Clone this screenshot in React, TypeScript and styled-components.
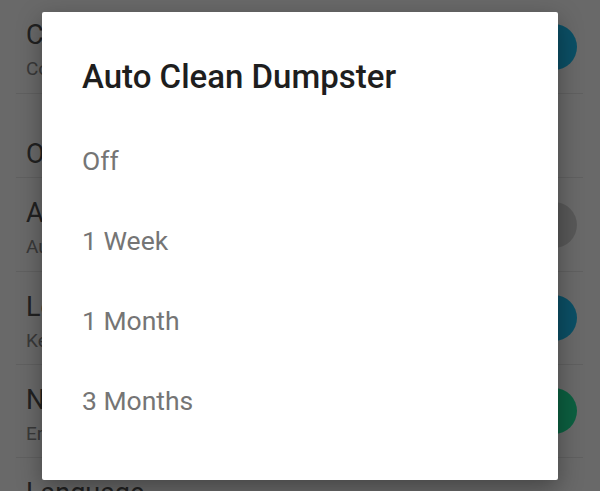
import * as React from 'react';
import styled, { createGlobalStyle } from 'styled-components';

const GlobalStyle = createGlobalStyle`
  html, body {
    margin: 0;
    padding: 0;
    background: #ffffff;
    overflow: hidden;
  }
  body {
    font-family: Roboto, "Noto Sans", sans-serif;
  }
`;

const Page = styled.div`
  position: relative;
  width: 600px;
  height: 491px;
  overflow: hidden;
  background: #ffffff;
`;

const List = styled.div`
  display: flex;
  flex-direction: column;
  margin: 0 17px 0 16px;
`;

const Row = styled.div<{ $height: number }>`
  display: flex;
  align-items: center;
  justify-content: space-between;
  height: ${({ $height }) => $height}px;
  padding: 0 6px 0 10px;
  border-bottom: 1px solid #e8e8e8;
  flex-shrink: 0;
`;

const TextBlock = styled.div<{ $top: number }>`
  align-self: flex-start;
  display: flex;
  flex-direction: column;
  padding-top: ${({ $top }) => $top}px;
`;

const RowTitle = styled.div`
  font-size: 27px;
  line-height: 32px;
  color: #505050;
  white-space: nowrap;
`;

const RowSubtitle = styled.div`
  margin-top: 2px;
  font-size: 19px;
  line-height: 32px;
  color: #8a8a8a;
  white-space: nowrap;
`;

const Badge = styled.div<{ $color: string }>`
  width: 46px;
  height: 46px;
  border-radius: 50%;
  background: ${({ $color }) => $color};
  flex-shrink: 0;
`;

const Scrim = styled.div`
  position: absolute;
  inset: 0;
  background: rgba(0, 0, 0, 0.59);
  display: flex;
  align-items: center;
  justify-content: center;
`;

const Dialog = styled.div`
  width: 516px;
  height: 468px;
  box-sizing: border-box;
  background: #ffffff;
  border-radius: 2px;
  box-shadow: 0 8px 24px rgba(0, 0, 0, 0.35);
  padding: 44px 40px 39px;
  display: flex;
  flex-direction: column;
`;

const DialogTitle = styled.h2`
  margin: 0 0 24px;
  font-size: 33px;
  line-height: 41px;
  font-weight: 500;
  color: #1e1e1e;
`;

const Option = styled.div`
  height: 80px;
  font-size: 26.5px;
  line-height: 80px;
  color: #757575;
`;

type Setting = {
  title: string;
  subtitle?: string;
  height: number;
  top: number;
  badge?: string;
};

const settings: Setting[] = [
  { title: 'Confirm deletion', subtitle: 'Confirm before deleting files', height: 93, top: 19, badge: '#1bc1f4' },
  { title: 'Other', height: 83, top: 44 },
  { title: 'Auto Clean Dumpster', subtitle: 'Automatically empty old files', height: 93, top: 19, badge: '#d6d6d6' },
  { title: 'Lock', subtitle: 'Keep Dumpster protected', height: 92, top: 19, badge: '#1bc1f4' },
  { title: 'Notifications', subtitle: 'Enable notifications', height: 92, top: 19, badge: '#1ee79c' },
  { title: 'Language', subtitle: 'English', height: 92, top: 19 },
];

const options = ['Off', '1 Week', '1 Month', '3 Months'];

const App: React.FC = () => (
  <>
    <GlobalStyle />
    <Page>
      <List>
        {settings.map((s) => (
          <Row key={s.title} $height={s.height}>
            <TextBlock $top={s.top}>
              <RowTitle>{s.title}</RowTitle>
              {s.subtitle && <RowSubtitle>{s.subtitle}</RowSubtitle>}
            </TextBlock>
            {s.badge && <Badge $color={s.badge} />}
          </Row>
        ))}
      </List>

      <Scrim>
        <Dialog>
          <DialogTitle>Auto Clean Dumpster</DialogTitle>
          {options.map((o) => (
            <Option key={o}>{o}</Option>
          ))}
        </Dialog>
      </Scrim>
    </Page>
  </>
);

export default App;
